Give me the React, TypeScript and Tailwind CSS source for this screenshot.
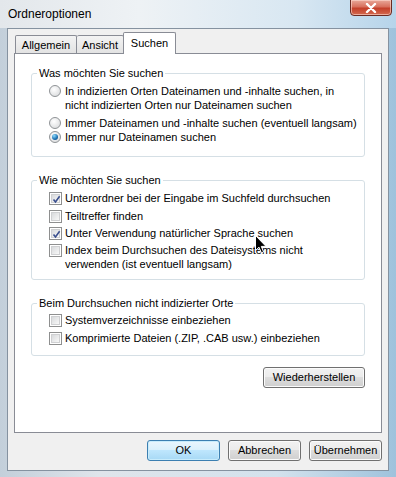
import type { ReactNode } from "react";

const Radio = ({ checked }: { checked?: boolean }) => (
    <span className="mt-[1px] w-[12px] h-[12px] rounded-full border border-[#8f9396] bg-[radial-gradient(circle_at_40%_35%,#ffffff,#d4d6d8)] flex items-center justify-center shrink-0">
        {checked && <span className="w-[6px] h-[6px] rounded-full bg-[radial-gradient(circle_at_35%_30%,#8fdcff,#1a6fb0_60%,#0c3f73)]" />}
    </span>
)

const Check = ({ checked }: { checked?: boolean }) => (
    <span className="mt-[1px] w-[13px] h-[13px] border border-[#8e8f8f] bg-white p-[1px] shrink-0">
        <span className="w-full h-full block border border-[#cfd0d2] bg-[linear-gradient(135deg,#d8dadc,#f8f8f8)]">
            {checked && (
                <svg viewBox="0 0 9 9" className="w-[9px] h-[9px]">
                    <path d="M1.5 4.5 L3.5 7 L7.6 1.3" fill="none" stroke="#3a4f8e" strokeWidth="1.6" />
                </svg>
            )}
        </span>
    </span>
)

const Row = ({ kind, checked, className, children }: { kind: "radio" | "check"; checked?: boolean; className?: string; children: ReactNode }) => (
    <div className={`flex items-start ${kind === "radio" ? "gap-[4px] pl-[17px]" : "gap-[3px] pl-[17px]"} ${className ?? ""}`}>
        {kind === "radio" ? <Radio checked={checked} /> : <Check checked={checked} />}
        <span className="leading-[14px]">{children}</span>
    </div>
)

const Group = ({ title, className, children }: { title: string; className?: string; children: ReactNode }) => (
    <fieldset className={`mx-[16px] border border-[#d5dfe5] rounded-[3px] ${className ?? ""}`}>
        <legend className="ml-[5px] px-[2px] leading-[14px]">{title}</legend>
        {children}
    </fieldset>
)

const Button = ({ children, primary, className }: { children: ReactNode; primary?: boolean; className?: string }) => (
    <div className={`h-[21px] flex items-center justify-center rounded-[3px] border ${primary ? "border-[#3c7fb1] bg-[linear-gradient(#eaf6fd_0%,#d9f0fc_49%,#bee6fd_50%,#a7d9f5_100%)] shadow-[inset_0_0_0_1px_#c8ecfc]" : "border-[#707070] bg-[linear-gradient(#f2f2f2_0%,#ebebeb_49%,#dddddd_50%,#cfcfcf_100%)] shadow-[inset_0_0_0_1px_#fbfbfb]"} ${className ?? ""}`}>
        {children}
    </div>
)

export default function App() {
    return (
        <div className="w-[396px] h-[477px] relative overflow-hidden font-['Liberation_Sans',Arial,sans-serif] text-[11px] text-black bg-[linear-gradient(90deg,#c3cfda_0%,#dfe5eb_25%,#d3e2ed_70%,#9fc2dc_100%)] flex flex-col">
            <div className="h-[28px] flex justify-between items-start pl-[8px] pr-[4px] bg-[linear-gradient(90deg,#e3e7eb_0%,#eef2f5_35%,#d8e7f2_75%,#b6d4ea_100%)]">
                <span className="mt-[6px] text-[12px] leading-[16px]">Ordneroptionen</span>
                <div className="w-[42px] h-[17px] -mt-px rounded-b-[4px] border border-[#6b2a22] bg-[linear-gradient(#e9a99a_0%,#d8705d_45%,#c4402a_55%,#d36a50_100%)] flex items-center justify-center shadow-[inset_0_0_0_1px_rgba(255,220,210,0.6)]">
                    <svg viewBox="0 0 12 10" className="w-[12px] h-[10px]">
                        <path d="M2 1 L10 9 M10 1 L2 9" stroke="#ffffff" strokeWidth="2.4" strokeLinecap="round" />
                    </svg>
                </div>
            </div>

            <div className="mx-[7px] h-[443px] border border-[#8592a0] bg-[#f0f0f0] pt-[3px] px-[6px]">
                <div className="flex items-end h-[21px] pl-[1px]">
                    <div className="h-[18px] w-[62px] border-t border-l border-r border-[#898c95] rounded-t-[2px] bg-[linear-gradient(#f3f3f3,#e3e3e3)] flex items-center justify-center leading-[14px]">Allgemein</div>
                    <div className="h-[18px] w-[47px] border-t border-r border-[#898c95] rounded-t-[2px] bg-[linear-gradient(#f3f3f3,#e3e3e3)] flex items-center justify-center leading-[14px]">Ansicht</div>
                    <div className="relative z-10 -ml-[1px] -mb-px h-[22px] w-[53px] border-t border-l border-r border-[#898c95] rounded-t-[2px] bg-white flex items-start pt-[3px] justify-center leading-[14px]">Suchen</div>
                </div>
                <div className="h-[380px] border border-[#898c95] bg-white pt-[12px] flex flex-col">
                    <Group title="Was möchten Sie suchen" className="pb-[12px]">
                        <Row kind="radio" className="mt-[4px]">In indizierten Orten Dateinamen und -inhalte suchen, in<br />nicht indizierten Orten nur Dateinamen suchen</Row>
                        <Row kind="radio" className="mt-[4px]">Immer Dateinamen und -inhalte suchen (eventuell langsam)</Row>
                        <Row kind="radio" checked>Immer nur Dateinamen suchen</Row>
                    </Group>
                    <Group title="Wie möchten Sie suchen" className="mt-[16px] pb-[8px]">
                        <Row kind="check" checked className="mt-[4px]">Unterordner bei der Eingabe im Suchfeld durchsuchen</Row>
                        <Row kind="check" className="mt-[4px]">Teiltreffer finden</Row>
                        <Row kind="check" checked className="mt-[3px]">Unter Verwendung natürlicher Sprache suchen</Row>
                        <Row kind="check" className="mt-[3px]">Index beim Durchsuchen des Dateisystems nicht<br />verwenden (ist eventuell langsam)</Row>
                    </Group>
                    <Group title="Beim Durchsuchen nicht indizierter Orte" className="mt-[16px] pb-[10px]">
                        <Row kind="check" className="mt-[3px]">Systemverzeichnisse einbeziehen</Row>
                        <Row kind="check" className="mt-[4px]">Komprimierte Dateien (.ZIP, .CAB usw.) einbeziehen</Row>
                    </Group>
                    <div className="flex justify-end mt-[11px] pr-[16px]">
                        <Button className="w-[102px]">Wiederherstellen</Button>
                    </div>
                </div>
                <div className="flex justify-end gap-[8px] mt-[7px]">
                    <Button primary className="w-[73px]">OK</Button>
                    <Button className="w-[73px]">Abbrechen</Button>
                    <Button className="w-[73px]">Übernehmen</Button>
                </div>
            </div>

            <svg viewBox="0 0 12 19" className="absolute left-[255px] top-[235px] w-[12px] h-[19px]">
                <path d="M0.5 0.5 L0.5 15.5 L4 12.2 L6.4 17.8 L8.6 16.9 L6.3 11.4 L11 11.4 Z" fill="#000" stroke="#fff" strokeWidth="1" />
            </svg>
        </div>
    )
}
